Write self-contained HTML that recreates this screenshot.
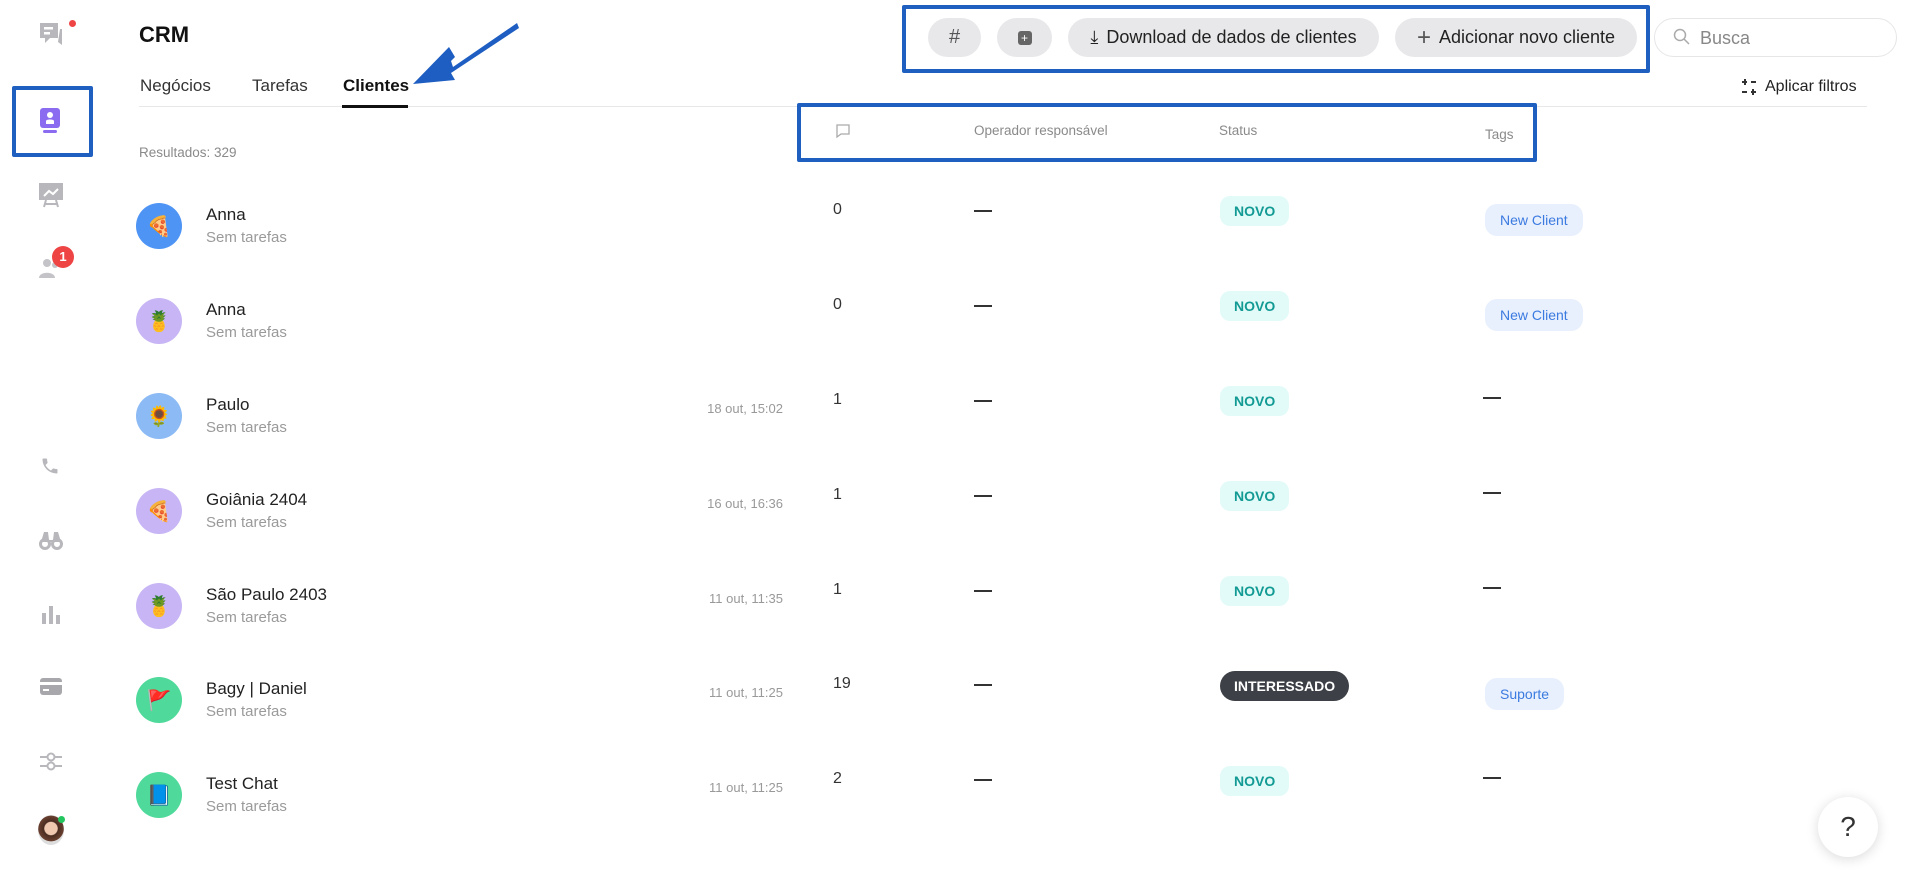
<!DOCTYPE html>
<html><head><meta charset="utf-8"><style>
*{margin:0;padding:0;box-sizing:border-box}
body{width:1907px;height:876px;background:#fff;font-family:"Liberation Sans","DejaVu Sans",sans-serif;position:relative;overflow:hidden;color:#1f2328}
.a{position:absolute}
.box{position:absolute;border:4px solid #1f5fbf;border-radius:2px}
.btn{position:absolute;top:18px;height:39px;background:#e8e8ea;border-radius:20px;font-size:18px;color:#222;display:flex;align-items:center;justify-content:center;gap:8px}
.av{position:absolute;left:136px;width:46px;height:46px;border-radius:50%;display:flex;align-items:center;justify-content:center;font-size:20px}
.nm{position:absolute;left:206px;font-size:17px;color:#222}
.sb{position:absolute;left:206px;font-size:15px;color:#9a9a9a}
.dt{position:absolute;right:1124px;font-size:13px;color:#999}
.ct{position:absolute;left:833px;font-size:16px;color:#333}
.ds{position:absolute;width:18px;height:1.5px;background:#333}
.st{position:absolute;left:1220px;height:30px;padding:0 14px;border-radius:10px;background:#e3fbf8;color:#139a94;font-size:14px;font-weight:bold;display:flex;align-items:center}
.tg{position:absolute;left:1485px;height:32px;padding:0 15px;border-radius:12px;background:#e8effd;color:#3b7be0;font-size:14px;display:flex;align-items:center}
</style></head><body>
<svg class="a" style="left:38px;top:21px" width="26" height="28" viewBox="0 0 26 28"><path d="M2 2h18v15H12l-5 5v-5H2z" fill="#b8b8bc"/><rect x="6" y="6" width="9" height="2.5" fill="#fff"/><rect x="6" y="11" width="6" height="2.5" fill="#fff"/><path d="M22 8h2v16l-4-3" fill="#b8b8bc"/></svg>
<div class="a" style="left:69px;top:20px;width:7px;height:7px;border-radius:50%;background:#ef4444"></div>
<div class="box" style="left:12px;top:86px;width:81px;height:71px"></div>
<svg class="a" style="left:39px;top:107px" width="22" height="28" viewBox="0 0 22 28"><rect x="1" y="1" width="20" height="20" rx="3" fill="#8b6cf0"/><circle cx="11" cy="8" r="3" fill="#fff"/><path d="M7 17v-3c0-2 8-2 8 0v3z" fill="#fff"/><rect x="4" y="23" width="14" height="3" rx="1.5" fill="#8b6cf0"/></svg>
<svg class="a" style="left:38px;top:182px" width="26" height="26" viewBox="0 0 26 26"><rect x="1" y="1" width="24" height="17" fill="#b8b8bc"/><path d="M6 14l5-5 4 3 5-5" stroke="#fff" stroke-width="2" fill="none"/><path d="M8 18l-2 7M18 18l2 7M7 22h12" stroke="#b8b8bc" stroke-width="2"/></svg>
<svg class="a" style="left:38px;top:256px" width="26" height="24" viewBox="0 0 26 24"><circle cx="9" cy="7" r="4" fill="#c4c4c8"/><path d="M1 22c0-7 16-7 16 0z" fill="#c4c4c8"/><circle cx="17" cy="9" r="3" fill="#c4c4c8"/></svg>
<div class="a" style="left:52px;top:246px;width:22px;height:22px;border-radius:50%;background:#ef4444;color:#fff;font-size:13px;font-weight:bold;text-align:center;line-height:22px">1</div>
<svg class="a" style="left:40px;top:456px" width="20" height="20" viewBox="0 0 24 24"><path d="M6.6 10.8a15 15 0 006.6 6.6l2.2-2.2c.3-.3.7-.4 1-.2 1.1.4 2.3.6 3.6.6.6 0 1 .4 1 1V20c0 .6-.4 1-1 1A17 17 0 013 4c0-.6.4-1 1-1h3.5c.6 0 1 .4 1 1 0 1.3.2 2.5.6 3.6.1.3 0 .7-.2 1z" fill="#b8b8bc"/></svg>
<svg class="a" style="left:39px;top:530px" width="24" height="20" viewBox="0 0 24 20"><circle cx="6" cy="14" r="4.5" stroke="#b8b8bc" stroke-width="3" fill="none"/><circle cx="18" cy="14" r="4.5" stroke="#b8b8bc" stroke-width="3" fill="none"/><path d="M2 12l3-10h4l1 8h4l1-8h4l3 10" fill="#b8b8bc"/></svg>
<svg class="a" style="left:41px;top:605px" width="20" height="19" viewBox="0 0 20 19"><rect x="1" y="8" width="4" height="11" fill="#b8b8bc"/><rect x="8" y="1" width="4" height="18" fill="#b8b8bc"/><rect x="15" y="10" width="4" height="9" fill="#b8b8bc"/></svg>
<svg class="a" style="left:39px;top:677px" width="24" height="19" viewBox="0 0 24 19"><rect x="1" y="1" width="22" height="17" rx="3" fill="#a8a8ac"/><rect x="1" y="5" width="22" height="3" fill="#fff"/><rect x="4" y="12" width="6" height="2" fill="#fff"/></svg>
<svg class="a" style="left:39px;top:751px" width="24" height="20" viewBox="0 0 24 20"><path d="M1 6h22M1 15h22" stroke="#b8b8bc" stroke-width="2"/><circle cx="12" cy="6" r="3.5" fill="#fff" stroke="#b8b8bc" stroke-width="2"/><circle cx="12" cy="15" r="3.5" fill="#fff" stroke="#b8b8bc" stroke-width="2"/></svg>
<div class="a" style="left:38px;top:815px;width:26px;height:30px;border-radius:50%;background:radial-gradient(circle at 50% 45%,#f0c8b0 30%,#4a2c20 34%,#6a4030 60%,#ddd 62%)"></div>
<div class="a" style="left:58px;top:816px;width:7px;height:7px;border-radius:50%;background:#22c55e"></div>

<div class="a" style="left:139px;top:22px;font-size:22px;font-weight:bold;color:#111">CRM</div>
<div class="a" style="left:140px;top:76px;font-size:17px;color:#333">Negócios</div>
<div class="a" style="left:252px;top:76px;font-size:17px;color:#333">Tarefas</div>
<div class="a" style="left:343px;top:76px;font-size:17px;font-weight:bold;color:#111">Clientes</div>
<div class="a" style="left:139px;top:106px;width:1728px;height:1px;background:#e8e8e8"></div>
<div class="a" style="left:342px;top:105px;width:66px;height:3px;background:#111"></div>
<svg class="a" style="left:405px;top:20px" width="115" height="70" viewBox="0 0 115 70"><path d="M112 3L48 47l-2-6 4-4-6-10L8 64l42-4-4-7 68-45z" fill="#1e5ec2"/></svg>

<div class="box" style="left:902px;top:5px;width:748px;height:68px"></div>
<div class="btn" style="left:928px;width:53px;font-size:20px;color:#555">#</div>
<div class="btn" style="left:997px;width:55px"><div style="width:14px;height:14px;border-radius:3px;background:#666;color:#fff;font-size:12px;line-height:14px;text-align:center">+</div></div>
<div class="btn" style="left:1068px;width:311px"><span style="font-size:18px">⤓</span>Download de dados de clientes</div>
<div class="btn" style="left:1395px;width:242px"><span style="font-size:24px;font-weight:300;color:#555">+</span>Adicionar novo cliente</div>
<div class="a" style="left:1654px;top:18px;width:243px;height:39px;border:1px solid #e6e6e6;border-radius:20px"></div>
<svg class="a" style="left:1673px;top:28px" width="18" height="18" viewBox="0 0 18 18"><circle cx="7" cy="7" r="5.5" stroke="#aaa" stroke-width="1.5" fill="none"/><path d="M11 11l5 5" stroke="#aaa" stroke-width="1.5"/></svg>
<div class="a" style="left:1700px;top:28px;font-size:18px;color:#888">Busca</div>
<svg class="a" style="left:1741px;top:78px" width="16" height="18" viewBox="0 0 16 18"><path d="M1 4h5M10 4h5M4 1v6M1 14h5M10 14h5M12 11v6" stroke="#333" stroke-width="2"/></svg>
<div class="a" style="left:1765px;top:78px;font-size:16px;color:#222">Aplicar filtros</div>

<div class="box" style="left:797px;top:103px;width:740px;height:59px"></div>
<svg class="a" style="left:835px;top:123px" width="16" height="16" viewBox="0 0 16 16"><path d="M2 2h12v9H6l-4 3z" stroke="#aaa" stroke-width="1.3" fill="none"/></svg>
<div class="a" style="left:974px;top:123px;font-size:13.5px;color:#8a8a8a">Operador responsável</div>
<div class="a" style="left:1219px;top:123px;font-size:13.5px;color:#8a8a8a">Status</div>
<div class="a" style="left:1485px;top:127px;font-size:13.5px;color:#8a8a8a">Tags</div>
<div class="a" style="left:139px;top:145px;font-size:13.5px;color:#8a8a8a">Resultados: 329</div>

<div class="av" style="top:203px;background:#4d94f5">🍕</div><div class="nm" style="top:205px">Anna</div><div class="sb" style="top:229px">Sem tarefas</div>
<div class="ct" style="top:201px">0</div><div class="ds" style="left:974px;top:210px"></div>
<div class="st" style="top:196px">NOVO</div><div class="tg" style="top:204px">New Client</div>

<div class="av" style="top:298px;background:#c7b5f5">🍍</div><div class="nm" style="top:300px">Anna</div><div class="sb" style="top:324px">Sem tarefas</div>
<div class="ct" style="top:296px">0</div><div class="ds" style="left:974px;top:305px"></div>
<div class="st" style="top:291px">NOVO</div><div class="tg" style="top:299px">New Client</div>

<div class="av" style="top:393px;background:#8cbaf5">🌻</div><div class="nm" style="top:395px">Paulo</div><div class="sb" style="top:419px">Sem tarefas</div>
<div class="dt" style="top:401px">18 out, 15:02</div>
<div class="ct" style="top:391px">1</div><div class="ds" style="left:974px;top:400px"></div>
<div class="st" style="top:386px">NOVO</div><div class="ds" style="left:1483px;top:397px"></div>

<div class="av" style="top:488px;background:#c7b5f5">🍕</div><div class="nm" style="top:490px">Goiânia 2404</div><div class="sb" style="top:514px">Sem tarefas</div>
<div class="dt" style="top:496px">16 out, 16:36</div>
<div class="ct" style="top:486px">1</div><div class="ds" style="left:974px;top:495px"></div>
<div class="st" style="top:481px">NOVO</div><div class="ds" style="left:1483px;top:492px"></div>

<div class="av" style="top:583px;background:#c7b5f5">🍍</div><div class="nm" style="top:585px">São Paulo 2403</div><div class="sb" style="top:609px">Sem tarefas</div>
<div class="dt" style="top:591px">11 out, 11:35</div>
<div class="ct" style="top:581px">1</div><div class="ds" style="left:974px;top:590px"></div>
<div class="st" style="top:576px">NOVO</div><div class="ds" style="left:1483px;top:587px"></div>

<div class="av" style="top:677px;background:#4fd99a">🚩</div><div class="nm" style="top:679px">Bagy | Daniel</div><div class="sb" style="top:703px">Sem tarefas</div>
<div class="dt" style="top:685px">11 out, 11:25</div>
<div class="ct" style="top:675px">19</div><div class="ds" style="left:974px;top:684px"></div>
<div class="st" style="top:671px;background:#3d4046;color:#fff;border-radius:15px">INTERESSADO</div><div class="tg" style="top:678px">Suporte</div>

<div class="av" style="top:772px;background:#4fd99a">📘</div><div class="nm" style="top:774px">Test Chat</div><div class="sb" style="top:798px">Sem tarefas</div>
<div class="dt" style="top:780px">11 out, 11:25</div>
<div class="ct" style="top:770px">2</div><div class="ds" style="left:974px;top:779px"></div>
<div class="st" style="top:766px">NOVO</div><div class="ds" style="left:1483px;top:777px"></div>

<div class="a" style="left:1818px;top:797px;width:60px;height:60px;border-radius:50%;background:#fff;box-shadow:0 2px 12px rgba(0,0,0,.15);font-size:28px;color:#333;text-align:center;line-height:60px">?</div>
</body></html>
